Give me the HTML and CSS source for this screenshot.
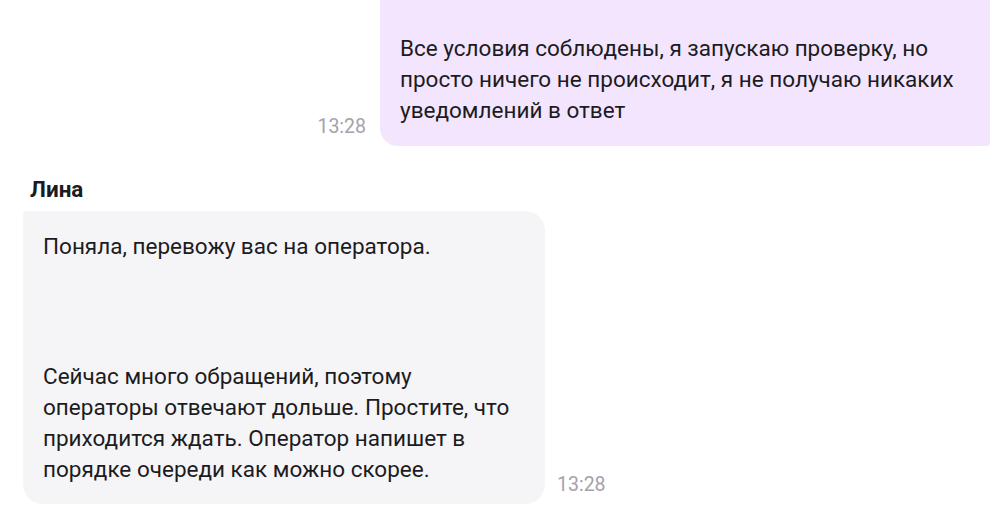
FILE: index.html
```html
<!DOCTYPE html>
<html lang="ru">
<head>
<meta charset="utf-8">
<link rel="stylesheet" href="styles.css">
</head>
<body>
<div class="chat">
  <div class="row row-out">
    <div class="time">13:28</div>
    <div class="bubble bubble-out">
      <p>Все условия соблюдены, я запускаю проверку, но просто ничего не происходит, я не получаю никаких уведомлений в ответ</p>
    </div>
  </div>
  <div class="group-in">
    <div class="name">Лина</div>
    <div class="row row-in">
      <div class="bubble bubble-in">
        <p>Поняла, перевожу вас на оператора.</p>
        <p class="gap">Сейчас много обращений, поэтому операторы отвечают дольше. Простите, что приходится ждать. Оператор напишет в порядке очереди как можно скорее.</p>
      </div>
      <div class="time">13:28</div>
    </div>
  </div>
</div>
</body>
</html>
```
FILE: styles.css
```css
html, body {
  margin: 0;
  padding: 0;
  background: #ffffff;
}
body {
  font-family: Roboto, "Liberation Sans", sans-serif;
  color: #1c1c1f;
  font-size: 22.5px;
  width: 1001px;
  height: 529px;
  overflow: hidden;
}
.chat {
  display: flex;
  flex-direction: column;
}
.row {
  display: flex;
  align-items: flex-end;
}
.row-out {
  justify-content: flex-end;
  padding-right: 11px;
  gap: 14px;
}
.row-in {
  padding-left: 23px;
  gap: 12px;
}
.bubble p {
  margin: 0;
  line-height: 31px;
}
.bubble-out {
  width: 570px;
  background: #f3e5fd;
  padding: 33px 20px 20px 20px;
  border-radius: 0 0 4px 18px;
}
.bubble-in {
  width: 482px;
  background: #f5f5f7;
  padding: 20px 20px 18.5px 20px;
  border-radius: 4px 20px 20px 20px;
}
.bubble-in .gap {
  margin-top: 99px;
}
.time {
  color: #a3a3ab;
  font-size: 19.5px;
  line-height: 24px;
  margin-bottom: 7px;
}
.group-in {
  margin-top: 31px;
}
.name {
  font-weight: 700;
  font-size: 22.5px;
  line-height: 24px;
  padding-left: 30px;
  margin-bottom: 10px;
}
```
